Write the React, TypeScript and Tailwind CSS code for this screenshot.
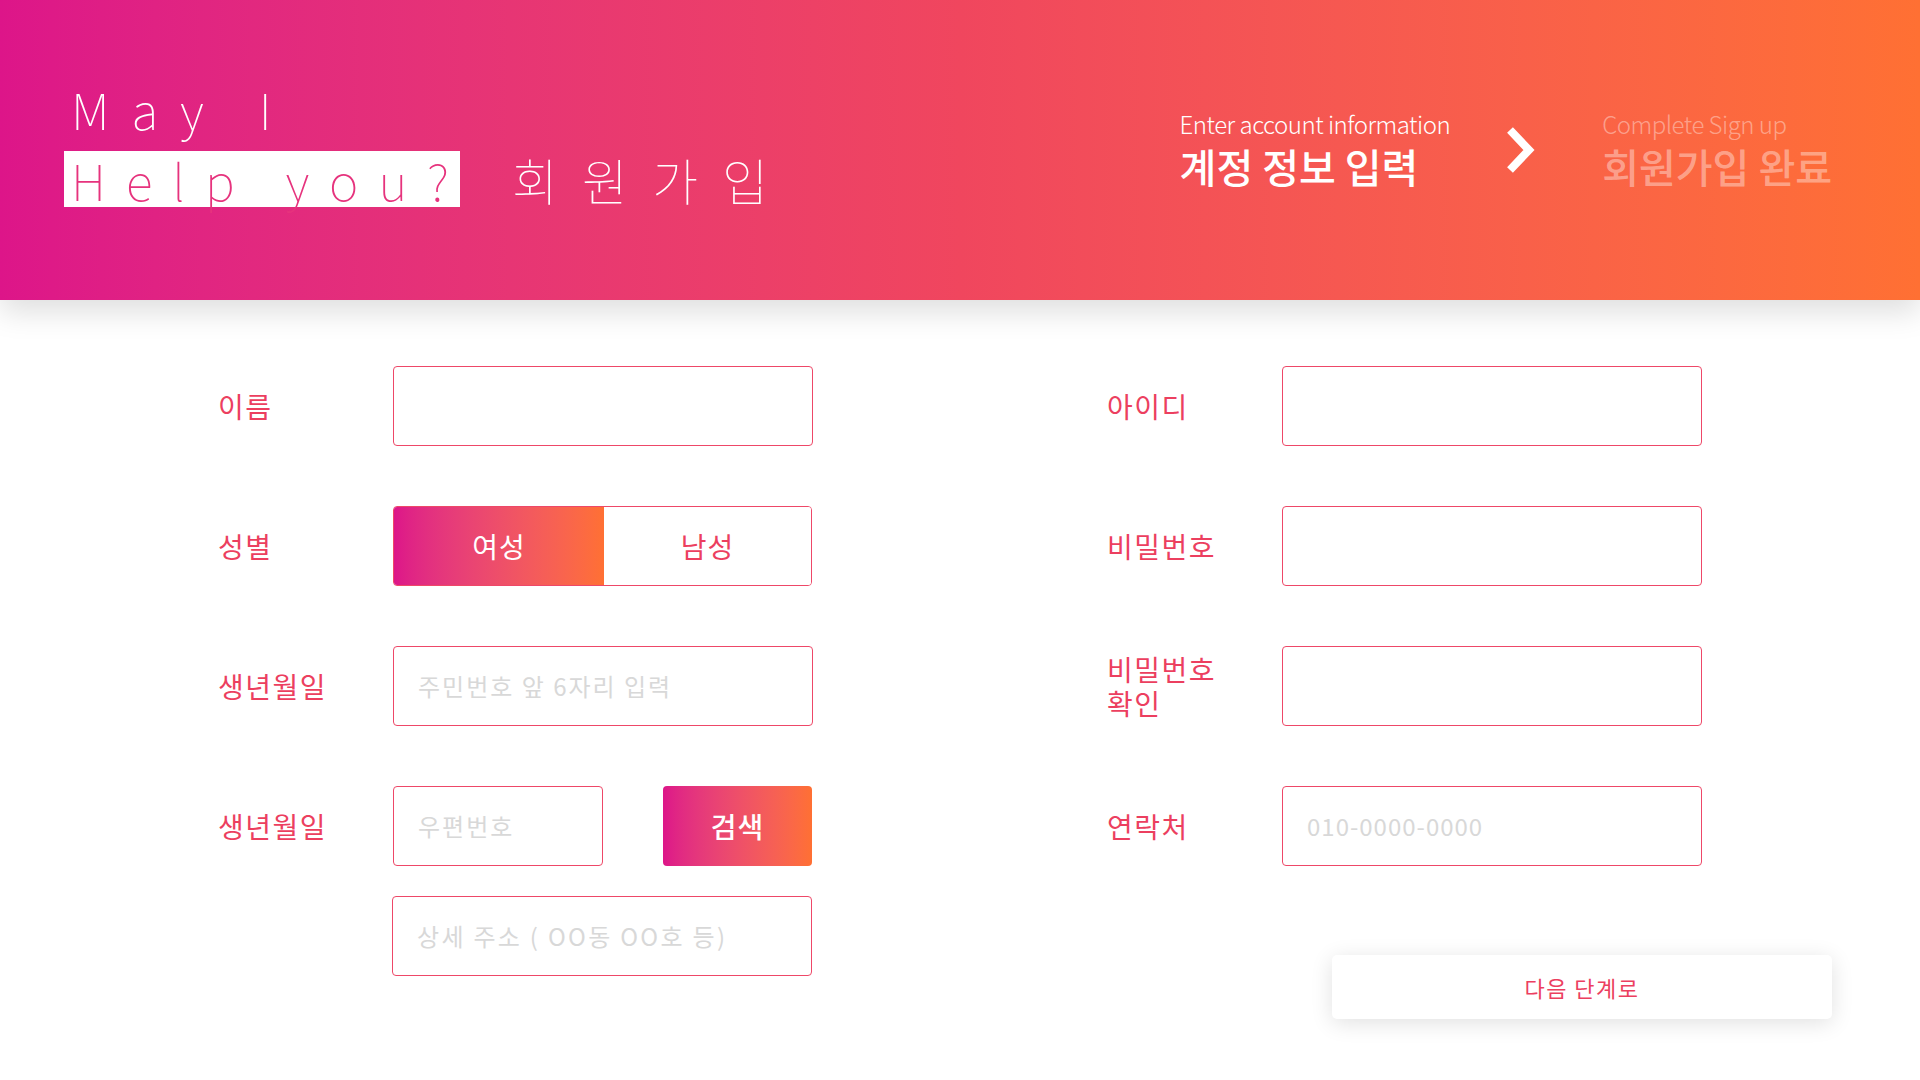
import React from "react";

const KR = "font-['Noto_Sans_CJK_KR','Noto_Sans',sans-serif]";

function Label({ children }: { children: React.ReactNode }) {
  return (
    <div className="w-[175px] shrink-0 text-[28px] leading-[34px] tracking-[1.5px] text-[#ec3f5f]">{children}</div>
  );
}

function Field({ placeholder, wide = true, tracking = "tracking-[2px]" }: { placeholder?: string; wide?: boolean; tracking?: string }) {
  return (
    <div
      className={`${wide ? "w-[420px]" : "w-[210px]"} h-[80px] shrink-0 rounded-[4px] border border-[#ee4868] bg-white flex items-center pl-[24px] text-[24px] whitespace-pre ${tracking} text-[#d8d8d8]`}
    >
      {placeholder}
    </div>
  );
}

function Row({ label, children }: { label: React.ReactNode; children: React.ReactNode }) {
  return (
    <div className="flex items-center h-[80px]">
      <Label>{label}</Label>
      {children}
    </div>
  );
}

export default function App() {
  return (
    <div className={`${KR} w-[1920px] h-[1080px] bg-white overflow-hidden relative`}>
      {/* Header */}
      <header className="relative z-10 h-[300px] bg-gradient-to-r from-[#dd1589] via-[#f0465e] to-[#ff7033] flex items-center justify-between pl-[64px] pr-[88px] shadow-[0_12px_28px_rgba(0,0,0,0.13)]">
        <div className="flex flex-col pb-[10px]">
          <div className="pl-[7px] text-[50px] leading-[50px] font-thin tracking-[22px] text-white whitespace-pre">May I</div>
          <div className="flex items-end mt-[18px]">
            <div className="w-[396px] h-[56px] bg-white pl-[7px] flex items-center">
              <span className="text-[50px] leading-[56px] font-thin tracking-[20px] -mr-[20px] text-[#e6337d] whitespace-nowrap">Help you?</span>
            </div>
            <div className="ml-[52px] text-[50px] leading-[56px] font-thin tracking-[24px] text-white whitespace-nowrap">회원가입</div>
          </div>
        </div>
        <div className="flex items-center">
          <div className="flex flex-col">
            <div className="text-[24px] leading-[32px] font-light tracking-[-0.5px] text-white">Enter account information</div>
            <div className="text-[40px] leading-[52px] font-medium text-white">계정 정보 입력</div>
          </div>
          <svg className="ml-[55px]" width="30" height="48" viewBox="0 0 30 48">
            <polyline points="5,4 24,24 5,44" fill="none" stroke="white" strokeWidth="8" strokeLinecap="butt" strokeLinejoin="miter" />
          </svg>
          <div className="ml-[67px] flex flex-col">
            <div className="text-[24px] leading-[32px] font-light tracking-[-0.5px] text-white/40">Complete Sign up</div>
            <div className="text-[40px] leading-[52px] font-medium text-white/40">회원가입 완료</div>
          </div>
        </div>
      </header>

      {/* Form */}
      <main className="flex pt-[66px] pl-[218px]">
        <div className="flex flex-col w-[594px]">
          <Row label="이름">
            <Field />
          </Row>
          <div className="mt-[60px]">
            <Row label="성별">
              <div className="flex w-[420px] h-[80px] rounded-[4px] border border-[#ee4868] overflow-hidden">
                <div className="w-[210px] h-full bg-gradient-to-r from-[#dd1589] to-[#ff7033] flex items-center justify-center text-[28px] tracking-[1px] text-white">여성</div>
                <div className="flex-1 h-full bg-white flex items-center justify-center text-[28px] tracking-[1px] text-[#ec3f5f]">남성</div>
              </div>
            </Row>
          </div>
          <div className="mt-[60px]">
            <Row label="생년월일">
              <Field placeholder="주민번호 앞 6자리 입력" />
            </Row>
          </div>
          <div className="mt-[60px]">
            <Row label="생년월일">
              <Field placeholder="우편번호" wide={false} />
              <button className="ml-[60px] w-[150px] h-[80px] rounded-[4px] bg-gradient-to-r from-[#dd1589] to-[#ff7033] text-white text-[28px] tracking-[1px] font-medium flex items-center justify-center">
                검색
              </button>
            </Row>
          </div>
          <div className="mt-[30px] pl-[174px]">
            <Field placeholder="상세 주소 ( OO동 OO호 등)" tracking="tracking-[2.3px]" />
          </div>
        </div>

        <div className="ml-[295px] flex flex-col w-[725px]">
          <Row label="아이디">
            <Field />
          </Row>
          <div className="mt-[60px]">
            <Row label="비밀번호">
              <Field />
            </Row>
          </div>
          <div className="mt-[60px]">
            <Row label={<>비밀번호<br />확인</>}>
              <Field />
            </Row>
          </div>
          <div className="mt-[60px]">
            <Row label="연락처">
              <Field placeholder="010-0000-0000" tracking="tracking-[1px]" />
            </Row>
          </div>
          <button className="self-end mt-[89px] w-[500px] h-[64px] rounded-[5px] bg-white shadow-[0_4px_22px_rgba(0,0,0,0.12)] text-[22px] tracking-[1.5px] text-[#ec3f5f] flex items-center justify-center">
            다음 단계로
          </button>
        </div>
      </main>
    </div>
  );
}
